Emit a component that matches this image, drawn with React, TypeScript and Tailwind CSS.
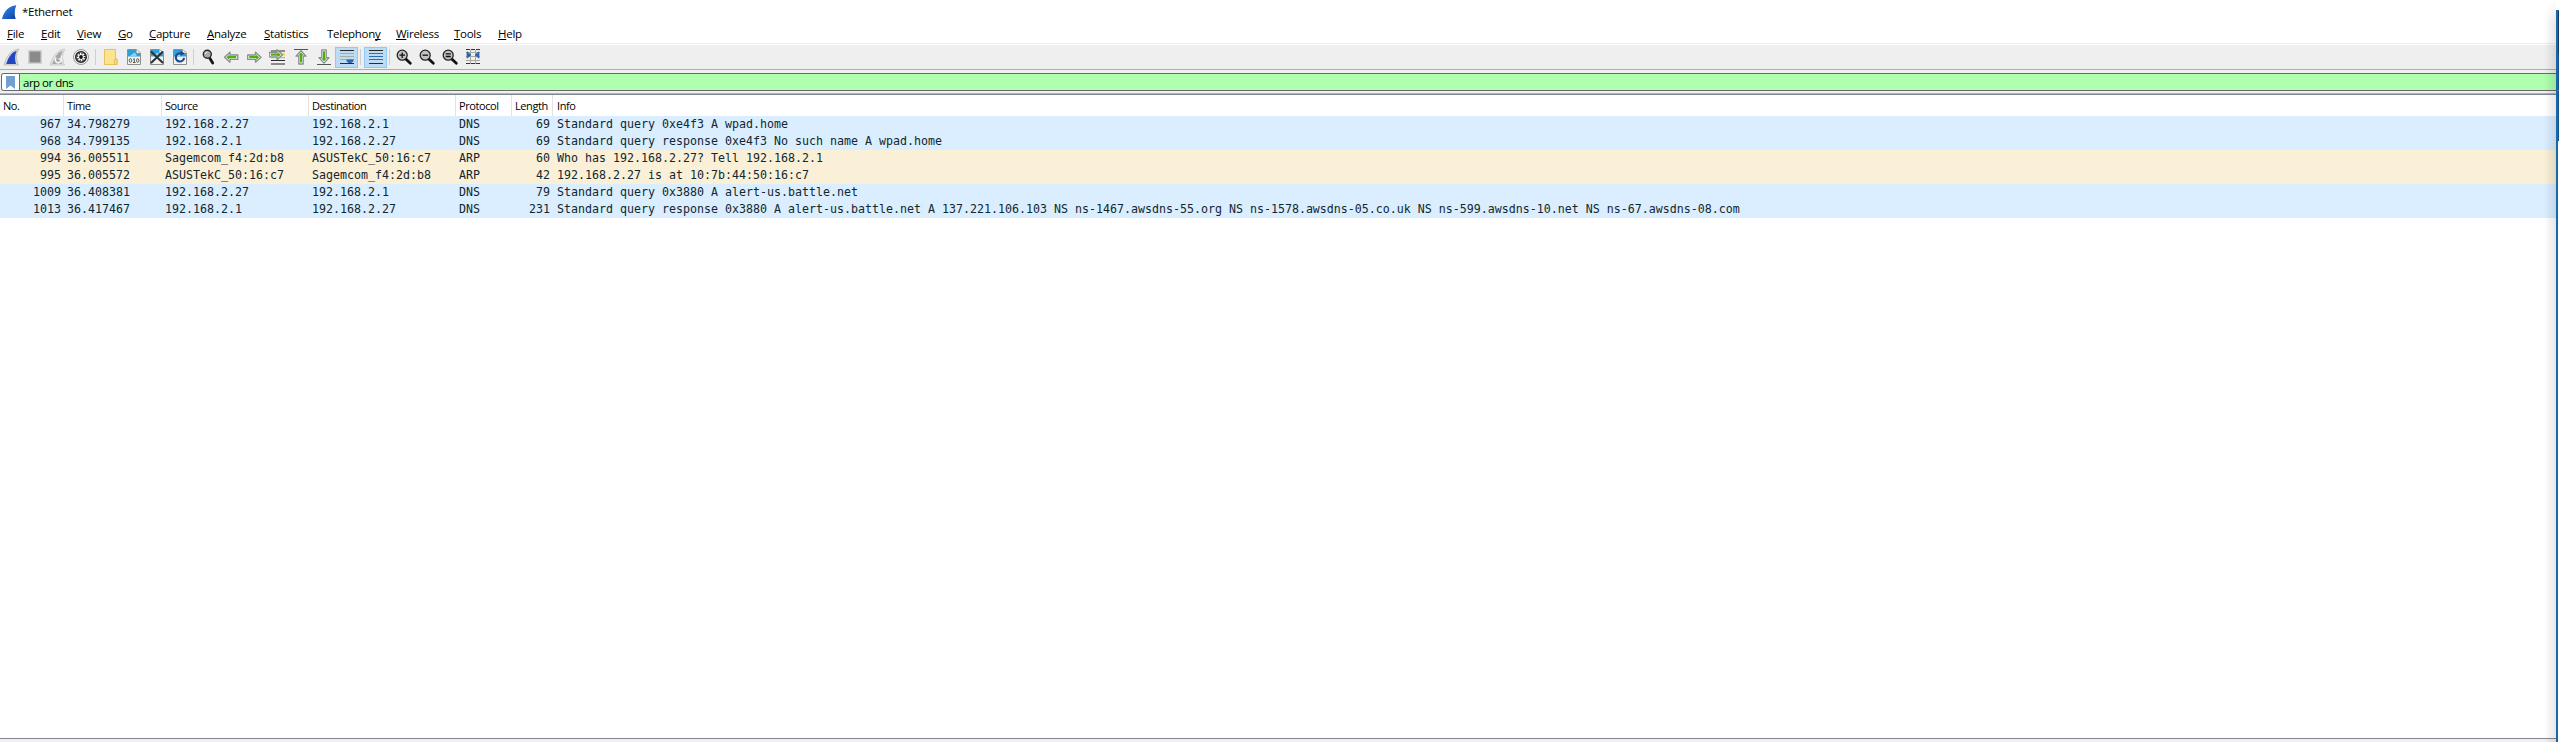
import React from "react";

type Menu = { pre: string; key: string; post: string; w: string };
const menus: Menu[] = [
  { pre: "", key: "F", post: "ile", w: "w-[34px]" },
  { pre: "", key: "E", post: "dit", w: "w-[36px]" },
  { pre: "", key: "V", post: "iew", w: "w-[41px]" },
  { pre: "", key: "G", post: "o", w: "w-[31px]" },
  { pre: "", key: "C", post: "apture", w: "w-[58px]" },
  { pre: "", key: "A", post: "nalyze", w: "w-[57px]" },
  { pre: "", key: "S", post: "tatistics", w: "w-[63px]" },
  { pre: "Telephon", key: "y", post: "", w: "w-[69px]" },
  { pre: "", key: "W", post: "ireless", w: "w-[58px]" },
  { pre: "", key: "T", post: "ools", w: "w-[44px]" },
  { pre: "", key: "H", post: "elp", w: "w-[40px]" },
];

type Row = [string, string, string, string, string, string, string];
const rows: Row[] = [
  ["967", "34.798279", "192.168.2.27", "192.168.2.1", "DNS", "69", "Standard query 0xe4f3 A wpad.home"],
  ["968", "34.799135", "192.168.2.1", "192.168.2.27", "DNS", "69", "Standard query response 0xe4f3 No such name A wpad.home"],
  ["994", "36.005511", "Sagemcom_f4:2d:b8", "ASUSTekC_50:16:c7", "ARP", "60", "Who has 192.168.2.27? Tell 192.168.2.1"],
  ["995", "36.005572", "ASUSTekC_50:16:c7", "Sagemcom_f4:2d:b8", "ARP", "42", "192.168.2.27 is at 10:7b:44:50:16:c7"],
  ["1009", "36.408381", "192.168.2.27", "192.168.2.1", "DNS", "79", "Standard query 0x3880 A alert-us.battle.net"],
  ["1013", "36.417467", "192.168.2.1", "192.168.2.27", "DNS", "231", "Standard query response 0x3880 A alert-us.battle.net A 137.221.106.103 NS ns-1467.awsdns-55.org NS ns-1578.awsdns-05.co.uk NS ns-599.awsdns-10.net NS ns-67.awsdns-08.com"],
];

const headers = ["No.", "Time", "Source", "Destination", "Protocol", "Length", "Info"];
const columns = "grid grid-cols-[64px_98px_147px_147px_56px_41px_1fr]";

function Slot({ children }: { children: React.ReactNode }) {
  return (
    <div className="w-[23px] shrink-0 pl-[2px]">
      <svg width="18" height="18" viewBox="0 0 18 18" className="block">
        {children}
      </svg>
    </div>
  );
}

function Checked({ children }: { children: React.ReactNode }) {
  return (
    <div className="flex h-[21px] w-[23px] shrink-0 items-center justify-center border border-[#90c8f6] bg-[#bcdcf4]">
      <svg width="18" height="18" viewBox="0 0 18 18" className="block shrink-0">
        {children}
      </svg>
    </div>
  );
}

const Separator = ({ className }: { className: string }) => (
  <div className={`h-[16px] w-px shrink-0 bg-[#cfcfcf] ${className}`} />
);

function Sheet() {
  return (
    <>
      <path d="M2.5 1.5H11.5L15.5 5V16.5H2.5Z" fill="#f4f4ee" stroke="#8d8f8c" />
      <path d="M3 2H11.3L15 5.2V8.5H3Z" fill="#2f9fdb" />
      <path d="M3 8C6 8.5 7 5.5 10 4.5L12 8.5H3Z" fill="#8fd0f0" />
      <path d="M11.5 1.5V5H15.5Z" fill="#fff" stroke="#a5a7a4" strokeWidth=".6" />
    </>
  );
}

const arrow = "M1.5 9.2L7 4.2V7H14.8V11.4H7V14.2Z";
function Arrow({ transform }: { transform?: string }) {
  return (
    <g transform={transform}>
      <path d={arrow} fill="#fff" stroke="#8c8c8c" strokeWidth="1.3" strokeLinejoin="round" />
      <path d="M3.3 9.2L6.4 6.4V8.1H13.3V10.3H6.4V12Z" fill="#4cb010" />
    </g>
  );
}

function Lens({ sign }: { sign: React.ReactNode }) {
  return (
    <>
      <path d="M10.8 11L15.3 15.3" stroke="#111" strokeWidth="2.8" strokeLinecap="round" />
      <circle cx="7.2" cy="7.2" r="5" fill="#c2c2c2" stroke="#222" strokeWidth="1.3" />
      <g stroke="#111" strokeWidth="1.3">{sign}</g>
    </>
  );
}

function Toolbar() {
  return (
    <div className="flex h-[24px] items-center bg-[#efefef] pl-px">
      <Slot>
        <path d="M1 17C3.5 8 8 2 16 1C12.8 6 13 12 15.5 17Z" fill="#d9d9d9" stroke="#b4b4b4" strokeWidth=".7" />
        <path d="M3.2 16C5.5 9 9 4 13.8 2.8C11.6 7 11.7 12 13 16Z" fill="#2546c0" />
      </Slot>
      <Slot>
        <path d="M2 2H16V16H2Z" fill="#d2d2d2" />
        <path d="M3.5 3.5H14.5V14.5H3.5Z" fill="#8a8a8a" />
      </Slot>
      <Slot>
        <path d="M1 17C3.5 8 8 2 16 1C12.8 6 13 12 15.5 17Z" fill="#e2e2e2" stroke="#c2c2c2" strokeWidth=".7" />
        <path d="M3.2 16C5.5 9 9 4 13.8 2.8C11.6 7 11.7 12 13 16Z" fill="#a6a6a6" />
        <path d="M7.2 9.5A3 3 0 1 0 12 10.5M12.5 7.5V11H9.5" fill="none" stroke="#f4f4f4" strokeWidth="1.6" />
      </Slot>
      <Slot>
        <circle cx="9" cy="9" r="7.5" fill="#f2f2f2" stroke="#9a9a9a" />
        <circle cx="9" cy="9" r="5.2" fill="#fff" stroke="#252525" strokeWidth="1.6" />
        <circle cx="9" cy="9" r="3.6" fill="none" stroke="#252525" strokeWidth="1.5" strokeDasharray="1.2 1.63" />
        <circle cx="9" cy="9" r="1.9" fill="#111" />
      </Slot>
      <Separator className="ml-[2px] mr-[4px]" />
      <Slot>
        <path d="M2.5 1.5H13.5V11H15V16.5H2.5Z" fill="#fde38d" stroke="#e5c25c" />
        <path d="M12.5 16.5V11.5H15V16.5Z" fill="#fbdb78" stroke="#e0b94c" strokeWidth=".8" />
      </Slot>
      <Slot>
        <Sheet />
        <g fill="none" stroke="#555" strokeWidth="1">
          <ellipse cx="5.5" cy="12.5" rx="1.3" ry="1.8" />
          <path d="M8.3 11.3L9.3 10.5V14.6M8 14.5H10.6" />
          <ellipse cx="12.7" cy="12.5" rx="1.2" ry="1.8" />
        </g>
      </Slot>
      <Slot>
        <Sheet />
        <path d="M3.5 4L14.5 14.5M14.5 4L3.5 14.5" stroke="#2c3133" strokeWidth="2.1" strokeLinecap="round" />
      </Slot>
      <Slot>
        <Sheet />
        <path d="M10.5 5.3H8.8A4.1 4.1 0 1 0 13 9.8" fill="none" stroke="#1f4a90" strokeWidth="2.2" />
        <path d="M9.5 2.5L13.8 5.4L9.5 8.6Z" fill="#1f4a90" />
      </Slot>
      <Separator className="ml-px mr-[4px]" />
      <Slot>
        <path d="M9.8 10.2L12.7 15" stroke="#161616" strokeWidth="2.8" strokeLinecap="round" />
        <circle cx="7.3" cy="6.2" r="4" fill="#aaa" stroke="#2a2a2a" strokeWidth="1.4" />
        <path d="M5.3 6A2.2 2.2 0 0 1 7.5 4" fill="none" stroke="#eee" />
      </Slot>
      <Slot><Arrow /></Slot>
      <Slot><Arrow transform="translate(16.5 0) scale(-1 1)" /></Slot>
      <Slot>
        <path d="M2 3H16M2 12.5H16M2 16H16" stroke="#2b2b2b" strokeWidth="1.2" />
        <path d="M11 4.8H16V8.3H11Z" fill="#fbe34c" />
        <path d="M2 9.7H16" stroke="#aaa" />
        <Arrow transform="translate(15 -2.5) scale(-1 1)" />
      </Slot>
      <Slot>
        <path d="M2 1.5H16" stroke="#555" />
        <Arrow transform="translate(18.2 1.2) rotate(90)" />
      </Slot>
      <Slot>
        <path d="M2 16.5H16" stroke="#555" />
        <Arrow transform="translate(-.2 16.6) rotate(-90)" />
      </Slot>
      <div className="-ml-px" />
      <Checked>
        <path d="M2 2.5H16M2 15.5H16" stroke="#2b2b2b" />
        <path d="M2 5.5H16M2 8.5H16M2 11.5H16" stroke="#aaa9a2" />
        <path d="M8.5 11.5H15.5V13.3L13.3 15H10.7L8.5 13.3Z" fill="#3266ad" />
      </Checked>
      <Separator className="ml-[2px] mr-[3px]" />
      <Checked>
        <path d="M2 2.5H16M2 15.5H16" stroke="#2b2b2b" />
        <path d="M2 5.5H16" stroke="#ef2929" />
        <path d="M2 8.5H16" stroke="#3465a4" />
        <path d="M2 11.5H16" stroke="#75507b" />
      </Checked>
      <Separator className="ml-[2px] mr-[3px]" />
      <Slot><Lens sign={<path d="M4.5 7.2H10M7.2 4.5V10" />} /></Slot>
      <Slot><Lens sign={<path d="M4.5 7.2H10" />} /></Slot>
      <Slot><Lens sign={<path d="M4.7 5.9H9.8M4.7 8.5H9.8" />} /></Slot>
      <Slot>
        <path d="M2 4.5H16M2 8.5H16M2 12.5H16M6.5 2V16M11.5 2V16" stroke="#a8a8a2" />
        <path d="M2 1.5H16M2 15.5H16" stroke="#333" strokeDasharray="4 1" />
        <path d="M3 3.8L7 7L3 10.2ZM15 3.8L11 7L15 10.2Z" fill="#2e64ad" stroke="#2e64ad" strokeWidth=".8" />
      </Slot>
    </div>
  );
}

export default function App() {
  return (
    <div className="relative flex h-[742px] w-full flex-col overflow-hidden bg-white font-['Open_Sans','Noto_Sans',sans-serif] text-[11.5px] tracking-[-0.27px] text-black">
      <div className="flex h-[24px] items-center pl-[2px]">
        <svg width="15" height="15" viewBox="0 0 15 15" className="mr-[5px] block">
          <defs>
            <linearGradient id="fin" x1="0" y1="0" x2="1" y2="1">
              <stop offset="0" stopColor="#3a8fe8" />
              <stop offset="1" stopColor="#0a3fa8" />
            </linearGradient>
          </defs>
          <path d="M0 14C2 6 7 1 14.3 .3C12.3 5 12.3 10 13.7 14Z" fill="url(#fin)" />
        </svg>
        <span>*Ethernet</span>
      </div>
      <div className="flex h-[19px] items-center pl-[7px] leading-none">
        {menus.map((m) => (
          <div key={m.key + m.post} className={`${m.w} shrink-0 whitespace-nowrap`}>
            {m.pre}
            <span className="underline decoration-1 underline-offset-[1px] [text-decoration-skip-ink:none]">{m.key}</span>
            {m.post}
          </div>
        ))}
      </div>
      <div className="h-px bg-[#ececec]" />
      <div className="h-px bg-white" />
      <Toolbar />
      <div className="h-px bg-[#adadad]" />
      <div className="flex h-[24px] flex-col bg-[#f0f0f0] pt-[3px]">
        <div className="ml-px flex h-[18px] overflow-hidden rounded-l-[3px] border border-r-0 border-[#6a6a6e] bg-[#afffaf]">
          <div className="flex w-[18px] items-center justify-center border-r border-[#6a6a6e] bg-white">
            <svg width="9" height="13" viewBox="0 0 9 13" className="block">
              <path d="M0 0H9V13L4.5 9.5L0 13Z" fill="#729fcf" />
            </svg>
          </div>
          <div className="flex items-center pl-[3px] pt-[2px] leading-none tracking-[-0.5px]">arp or dns</div>
        </div>
        <div className="mt-[2px] h-px bg-[#b4b4b4]" />
      </div>
      <div className="h-px bg-[#828790]" />
      <div className={`${columns} h-[21px] shrink-0 text-[11px] tracking-[-0.42px]`}>
        {headers.map((h, i) => (
          <div
            key={h}
            className={`flex items-center whitespace-nowrap pt-[2px] ${i === 6 ? "pl-[4px]" : "pl-[3px]"} ${i < 6 ? "border-r border-[#e2e2e2]" : ""}`}
          >
            {h}
          </div>
        ))}
      </div>
      <div className="font-['DejaVu_Sans_Mono',monospace] text-[11.63px] tracking-normal text-[#12272e]">
        {rows.map((r) => (
          <div key={r[0]} className={`${columns} h-[17px] items-center ${r[4] === "ARP" ? "bg-[#faf0d7]" : "bg-[#daeeff]"}`}>
            {r.map((c, i) => (
              <div
                key={i}
                className={`whitespace-nowrap leading-[17px] ${i === 0 || i === 5 ? "pr-[3px] text-right" : i === 6 ? "pl-[4px]" : "pl-[3px]"}`}
              >
                {c}
              </div>
            ))}
          </div>
        ))}
      </div>
      <div className="flex-1" />
      <div className="h-px bg-[#828790]" />
      <div className="h-[3px] bg-[#f0f0f0]" />
      <div className="absolute right-[3px] top-0 h-full w-[12px] bg-linear-to-r from-black/0 to-black/10 [mask-image:linear-gradient(to_bottom,transparent,black_24px)]" />
      <div className="absolute bottom-0 right-0 top-[10px] flex w-[3px]">
        <div className="w-[2px] bg-[#1769aa]" />
        <div className="flex w-px flex-col">
          <div className="h-px bg-[#1769aa]" />
          <div className="h-[42px] bg-[#14375e]" />
          <div className="h-[37px] bg-[#1a4f8c]" />
          <div className="h-px bg-[#6f93b8]" />
          <div className="h-[50px] bg-[#14508a]" />
          <div className="flex-1 bg-white" />
        </div>
      </div>
    </div>
  );
}
